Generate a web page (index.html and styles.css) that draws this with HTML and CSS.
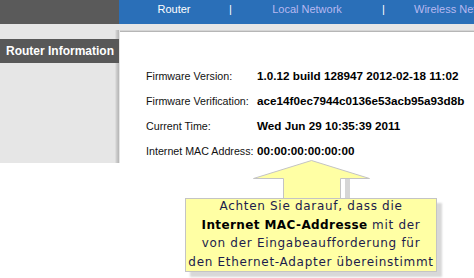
FILE: index.html
```html
<!DOCTYPE html>
<html lang="de">
<head>
    <meta charset="UTF-8">
    <title>Router Information</title>
    <link rel="stylesheet" href="styles.css">
</head>
<body>
    <div class="top">
        <div class="top__brand"></div>
        <div class="top__nav">
            <span class="nav__item nav__item--active">Router</span>
            <span class="nav__sep">|</span>
            <span class="nav__item nav__item--wide">Local Network</span>
            <span class="nav__sep">|</span>
            <span class="nav__item nav__item--last">Wireless Network</span>
        </div>
    </div>

    <div class="page">
        <div class="side">
            <div class="side__title">Router Information</div>
        </div>
        <div class="content">
            <div class="info">
                <span class="info__label">Firmware Version:</span>
                <span class="info__value">1.0.12 build 128947 2012-02-18 11:02</span>
                <span class="info__label">Firmware Verification:</span>
                <span class="info__value">ace14f0ec7944c0136e53acb95a93d8b</span>
                <span class="info__label">Current Time:</span>
                <span class="info__value">Wed Jun 29 10:35:39 2011</span>
                <span class="info__label">Internet MAC Address:</span>
                <span class="info__value">00:00:00:00:00:00</span>
            </div>
        </div>

        <!-- Hinweis-Blase -->
        <div class="callout">
            <svg class="callout__arrow" width="122" height="40" viewBox="0 0 122 40">
                <polygon points="92,19 92,39 97,39 97,19" fill="#d6d6d6"/>
                <polygon points="58.5,0.5 0.5,18.5 30.5,18.5 30.5,39 87.5,39 87.5,18.5 116.5,18.5"
                         fill="#ffffa4" stroke="#c4c4c4" stroke-width="1"/>
                <polygon points="31,18 87,18 87,40 31,40" fill="#ffffa4"/>
            </svg>
            <div class="callout__box">
                <p class="callout__text">
                    Achten Sie darauf, dass die<br>
                    <b>Internet MAC-Addresse</b> mit der<br>
                    von der Eingabeaufforderung für<br>
                    den Ethernet-Adapter übereinstimmt
                </p>
            </div>
        </div>
    </div>
</body>
</html>
```

FILE: styles.css
```css
body {
    margin: 0;
    background: #fff;
    font-family: "Liberation Sans", Arial, sans-serif;
    font-size: 11px;
    color: #000;
}
.top {
    display: flex;
    height: 24px;
}
.top__brand {
    width: 119px;
    flex-shrink: 0;
    background: #5a5a5a;
}
.top__nav {
    flex: 1;
    display: flex;
    align-items: flex-start;
    background: #2a6fb8;
    color: #b8b8f0;
    line-height: 19px;
    overflow: hidden;
    white-space: nowrap;
}
.nav__item {
    flex-shrink: 0;
    width: 110px;
    text-align: center;
}
.nav__item--active { color: #fff; }
.nav__item--wide { width: 150px; }
.nav__item--last {
    width: auto;
    padding-left: 29px;
}
.nav__sep {
    flex-shrink: 0;
    color: #fff;
    width: 3px;
    text-align: center;
}
.page {
    position: relative;
    display: flex;
    align-items: flex-start;
    height: 254px;
}
.side {
    width: 120px;
    height: 139px;
    flex-shrink: 0;
    padding-top: 15px;
    box-sizing: border-box;
    background:
        linear-gradient(to right, #e6e6e6 115px, #d2d2d2 116px, #b4b4b4 119px, #e6e6e6 119px) 0 6px / 100% 100% no-repeat,
        #e6e6e6;
}
.side__title {
    width: 119px;
    height: 24px;
    background: #585858;
    color: #fff;
    font-weight: bold;
    font-size: 12px;
    line-height: 24px;
    padding-left: 6px;
    box-sizing: border-box;
}
.content {
    flex: 1;
    padding-top: 8px;
    background: linear-gradient(to bottom, #e6e6e6 6px, #c4c4c4 7px, #a8a8a8 8px, #fff 8px);
}
.info {
    display: grid;
    grid-template-columns: 111px auto;
    grid-auto-rows: 25px;
    align-items: center;
    padding: 31px 0 0 26px;
    white-space: nowrap;
}
.info__label {
    color: #111;
    font-size: 10.7px;
}
.info__value {
    font-weight: bold;
    font-size: 11.7px;
}
.callout {
    position: absolute;
    left: 185px;
    top: 136px;
}
.callout__arrow {
    display: block;
    margin-left: 68px;
    margin-bottom: -2px;
}
.callout__box {
    position: relative;
    width: 250px;
    height: 72px;
    background: #ffffa4;
    border: 1px solid #c4c4c4;
    box-shadow: 5px 5px 2px #d8d8d8;
    color: #1c1c4c;
    font-family: "DejaVu Sans", Verdana, sans-serif;
    font-size: 12px;
    letter-spacing: 0.7px;
    line-height: 18.7px;
    text-align: center;
    white-space: nowrap;
}
.callout__text {
    margin: -2px 0 0;
}
.callout__box b {
    color: #000;
    letter-spacing: 0.4px;
}
```
